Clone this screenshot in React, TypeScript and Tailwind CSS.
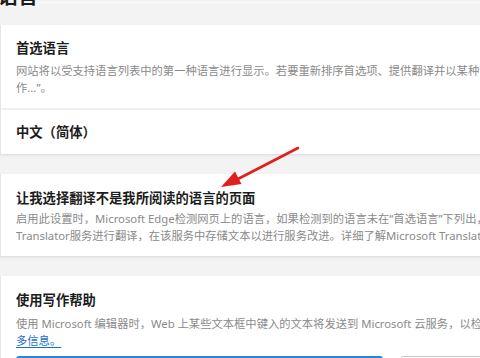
import React from "react";

const font = "font-['Noto_Sans','Noto_Sans_CJK_SC',sans-serif]";

const Title = ({ children }: { children: React.ReactNode }) => (
  <div className="text-[13.3px] leading-[18px] font-semibold text-[#1c1c1c] whitespace-nowrap">
    {children}
  </div>
);

const Line = ({ children }: { children: React.ReactNode }) => (
  <div className="text-[11.3px] leading-[17px] text-[#8a8a8a] whitespace-nowrap">
    {children}
  </div>
);

const Arrow = () => (
  <svg
    className="absolute left-0 top-0 pointer-events-none"
    width="480"
    height="358"
    viewBox="0 0 480 358"
  >
    <line x1="298" y1="148" x2="236" y2="180" stroke="#e0201c" strokeWidth="2.6" strokeLinecap="round" />
    <polygon points="221,187 241.5,184 235,171.5" fill="#e0201c" />
  </svg>
);

export default function App() {
  return (
    <div className={`relative w-[480px] h-[358px] overflow-hidden bg-[#f3f3f3] ${font}`}>
      {/* page heading, scrolled mostly out of view */}
      <div className="h-[25px] flex flex-col">
        <div className="h-px bg-[#fbfbfb] mt-[2px]" />
        <div className="text-[20px] leading-[24px] font-bold text-[#1a1a1a] -mt-[18px] -ml-[2px]">语言</div>
      </div>

      {/* preferred languages */}
      <div className="bg-white border-l border-[#e6e6e6] border-b border-b-[#e2e2e2] shadow-[0_1px_2px_rgba(0,0,0,0.06)]">
        <div className="h-[83px] px-[15px] pt-[14px] overflow-hidden">
          <Title>首选语言</Title>
          <div className="mt-[5px]">
            <Line>网站将以受支持语言列表中的第一种语言进行显示。若要重新排序首选项、提供翻译并以某种语言进行拼写检查，请选择语言名称旁边的“更多操</Line>
            <Line>作...”。</Line>
          </div>
        </div>
        <div className="h-[2px] bg-[#efefef]" />
        <div className="h-[44px] px-[15px] flex items-center">
          <Title>中文（简体）</Title>
        </div>
      </div>

      {/* offer to translate */}
      <div className="mt-[19px] h-[83px] bg-white border-l border-[#e6e6e6] border-b border-b-[#e2e2e2] shadow-[0_1px_2px_rgba(0,0,0,0.06)] px-[15px] pt-[15px] overflow-hidden">
        <Title>让我选择翻译不是我所阅读的语言的页面</Title>
        <div className="mt-[3px]">
          <Line>启用此设置时，Microsoft Edge检测网页上的语言，如果检测到的语言未在“首选语言”下列出，将提示你使用 Microsoft</Line>
          <Line>Translator服务进行翻译，在该服务中存储文本以进行服务改进。详细了解Microsoft Translator</Line>
        </div>
      </div>

      {/* writing assistance */}
      <div className="mt-[19px] bg-white border-l border-[#e6e6e6] px-[15px] pt-[15px]">
        <Title>使用写作帮助</Title>
        <div className="mt-[6px]">
          <Line>使用 Microsoft 编辑器时，Web 上某些文本框中键入的文本将发送到 Microsoft 云服务，以检查拼写和语法。获取更</Line>
          <div className="text-[11.3px] leading-[18px] text-[#1a6fc4] underline underline-offset-2 whitespace-nowrap">
            多信息。
          </div>
        </div>
        <div className="flex gap-[17px] mt-[6px]">
          <div className="w-[367px] h-[20px] border-2 border-[#2b84d8] rounded-[3px] bg-white" />
          <div className="flex-1 h-[20px] border border-[#c8c8c8] rounded-[3px] bg-white -mr-[20px]" />
        </div>
      </div>

      <Arrow />
    </div>
  );
}
